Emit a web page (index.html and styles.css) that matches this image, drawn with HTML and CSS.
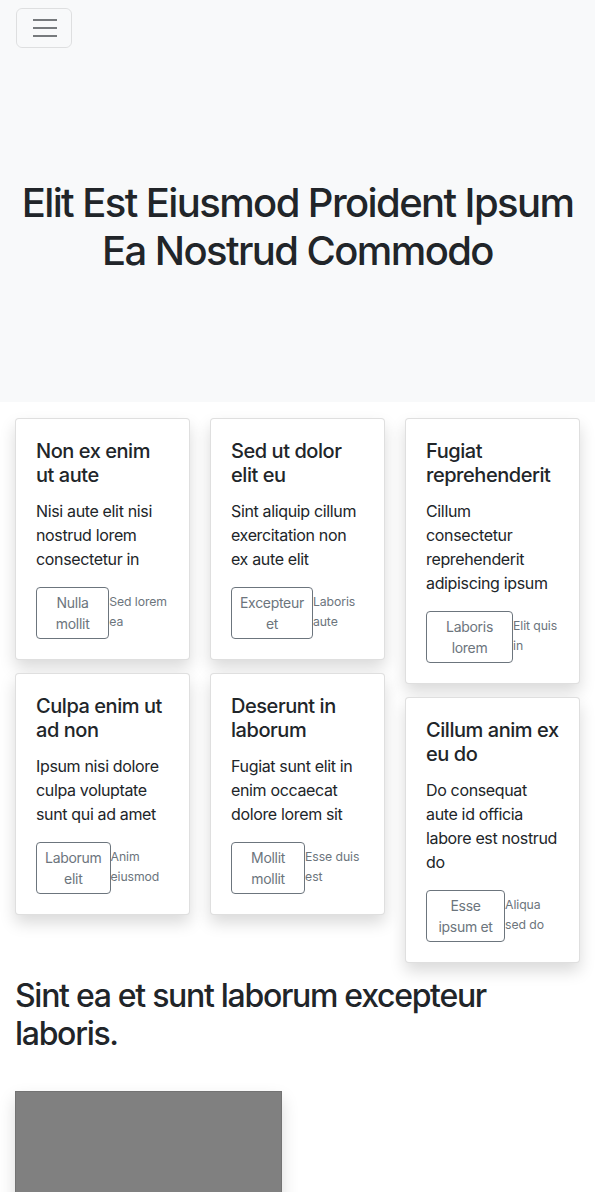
FILE: index.html
```html
<!DOCTYPE html>
<html lang="en">
<head>
<meta charset="utf-8">
<title>Album</title>
<link rel="stylesheet" href="styles.css">
</head>
<body>
<header class="hero">
  <nav class="navbar">
    <button class="toggler" type="button" aria-label="Toggle navigation">
      <svg width="30" height="30" viewBox="0 0 30 30" aria-hidden="true">
        <path d="M4 7h24M4 15h24M4 23h24" stroke="rgba(33,37,41,0.6)" stroke-width="2" stroke-linecap="butt" fill="none"/>
      </svg>
    </button>
  </nav>
  <div class="hero-body">
    <h1 class="hero-title">Elit Est Eiusmod Proident Ipsum Ea Nostrud Commodo</h1>
  </div>
</header>

<main>
  <section class="cards">
    <div class="col">
      <div class="card">
        <h5 class="card-title">Non ex enim ut aute</h5>
        <p class="card-text">Nisi aute elit nisi nostrud lorem consectetur in</p>
        <div class="card-actions">
          <button class="btn">Nulla mollit</button>
          <small class="muted">Sed lorem ea</small>
        </div>
      </div>
      <div class="card">
        <h5 class="card-title">Culpa enim ut ad non</h5>
        <p class="card-text">Ipsum nisi dolore culpa voluptate sunt qui ad amet</p>
        <div class="card-actions">
          <button class="btn">Laborum elit</button>
          <small class="muted">Anim eiusmod</small>
        </div>
      </div>
    </div>
    <div class="col">
      <div class="card">
        <h5 class="card-title">Sed ut dolor elit eu</h5>
        <p class="card-text">Sint aliquip cillum exercitation non ex aute elit</p>
        <div class="card-actions">
          <button class="btn">Excepteur et</button>
          <small class="muted">Laboris aute</small>
        </div>
      </div>
      <div class="card">
        <h5 class="card-title">Deserunt in laborum</h5>
        <p class="card-text">Fugiat sunt elit in enim occaecat dolore lorem sit</p>
        <div class="card-actions">
          <button class="btn">Mollit mollit</button>
          <small class="muted">Esse duis est</small>
        </div>
      </div>
    </div>
    <div class="col">
      <div class="card">
        <h5 class="card-title">Fugiat reprehenderit</h5>
        <p class="card-text">Cillum consectetur reprehenderit adipiscing ipsum</p>
        <div class="card-actions">
          <button class="btn">Laboris lorem</button>
          <small class="muted">Elit quis in</small>
        </div>
      </div>
      <div class="card">
        <h5 class="card-title">Cillum anim ex eu do</h5>
        <p class="card-text">Do consequat aute id officia labore est nostrud do</p>
        <div class="card-actions">
          <button class="btn">Esse ipsum et</button>
          <small class="muted">Aliqua sed do</small>
        </div>
      </div>
    </div>
  </section>

  <section class="feature">
    <h2 class="feature-title">Sint ea et sunt laborum excepteur laboris.</h2>
    <div class="placeholder"></div>
  </section>
</main>
</body>
</html>
```

FILE: styles.css
```css
* { box-sizing: border-box; }

html, body {
  margin: 0;
  padding: 0;
}

body {
  font-family: Inter, "Liberation Sans", sans-serif;
  color: #212529;
  background: #fff;
  font-size: 16px;
  line-height: 1.5;
}

.hero {
  background: #f8f9fa;
  height: 402px;
}

.navbar {
  padding: 8px 16px;
  height: 56px;
}

.toggler {
  width: 56px;
  height: 40px;
  padding: 0;
  display: flex;
  align-items: center;
  justify-content: center;
  background: transparent;
  border: 1px solid rgba(0, 0, 0, 0.1);
  border-radius: 6px;
}

.hero-body {
  padding: 123px 10px 0;
}

.hero-title {
  margin: 0;
  text-align: center;
  font-size: 40px;
  font-weight: 500;
  line-height: 48px;
  letter-spacing: -1.6px;
}

.cards {
  display: flex;
  gap: 20px;
  padding: 16px 15px 0;
  align-items: flex-start;
}

.col {
  width: 175px;
  flex: 0 0 175px;
  display: flex;
  flex-direction: column;
  gap: 13px;
}

.card {
  background: #fff;
  border: 1px solid rgba(0, 0, 0, 0.125);
  border-radius: 4px;
  box-shadow: 0 8px 16px rgba(0, 0, 0, 0.15);
  padding: 20px;
}

.card-title {
  margin: 0 0 12px;
  font-size: 20px;
  font-weight: 500;
  line-height: 24px;
  letter-spacing: -0.45px;
}

.card-text {
  margin: 0 0 16px;
  font-size: 16px;
  line-height: 24px;
  letter-spacing: -0.35px;
}

.card-actions {
  display: flex;
  align-items: flex-start;
}

.btn {
  font-family: inherit;
  font-size: 14px;
  line-height: 21px;
  padding: 4px 8px;
  color: #6c757d;
  background: transparent;
  border: 1px solid #6c757d;
  border-radius: 4px;
  text-align: center;
  flex: 0 1 auto;
  letter-spacing: -0.3px;
}

.muted {
  display: block;
  flex: 0 1 auto;
  font-size: 12.25px;
  line-height: 20px;
  padding-top: 5px;
  color: #6c757d;
  letter-spacing: -0.1px;
}

.feature {
  padding: 14px 15px 0;
}

.feature-title {
  margin: 0 0 37px;
  font-size: 32px;
  font-weight: 500;
  line-height: 38.4px;
  letter-spacing: -1.3px;
}

.placeholder {
  width: 267px;
  height: 200px;
  background: #808080;
  border: 1px solid rgba(0, 0, 0, 0.1);
  box-shadow: 0 8px 16px rgba(0, 0, 0, 0.15);
}
```
